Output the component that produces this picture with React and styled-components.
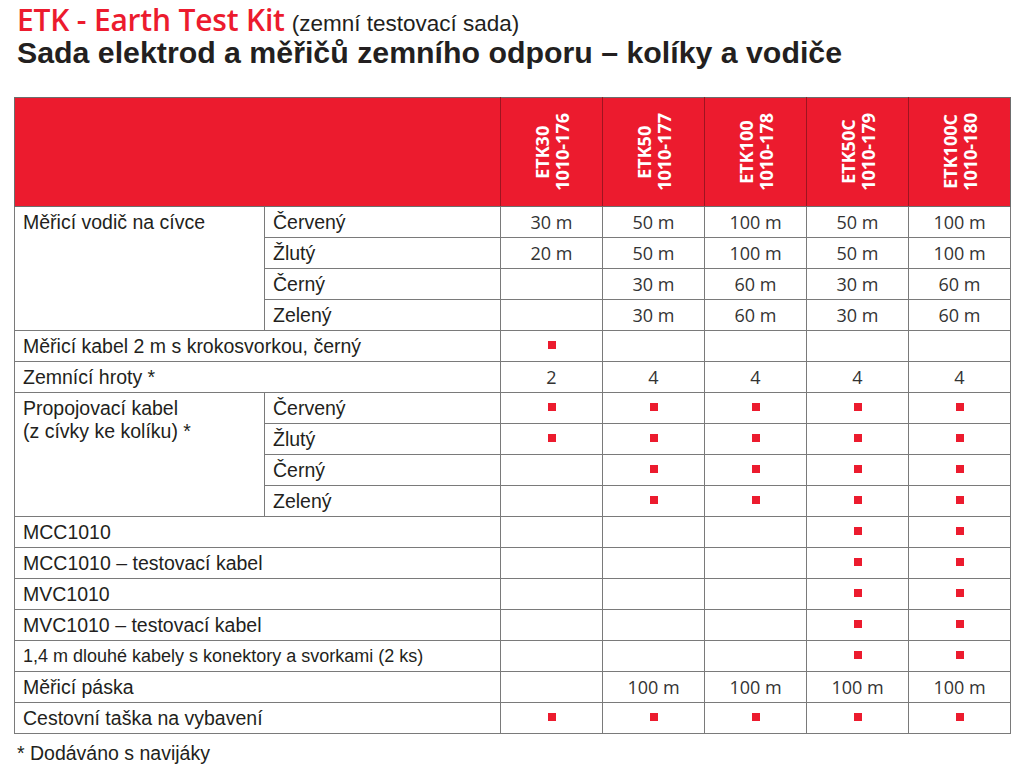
import React from "react";
import styled, { createGlobalStyle } from "styled-components";

const Global = createGlobalStyle`
  html, body { margin: 0; padding: 0; background: #fff; }
  body { font-family: "Liberation Sans", Arial, sans-serif; color: #231f20; }
`;

const RED = "#ec1b2e";

const Page = styled.div`
  width: 1024px;
  height: 768px;
  box-sizing: border-box;
  padding: 0 0 0 14px;
  overflow: hidden;
`;

const Heading = styled.header`
  padding-left: 3px;
  margin-bottom: 25px;
`;

const TitleLine = styled.div`
  height: 34px;
  line-height: 40px;
  white-space: nowrap;
`;

const Brand = styled.span`
  font-family: "Open Sans", sans-serif;
  font-weight: 600;
  font-size: 30px;
  color: ${RED};
  letter-spacing: -0.2px;
`;

const Sub = styled.span`
  font-family: "Liberation Sans", Arial, sans-serif;
  font-size: 22.5px;
  color: #231f20;
  margin-left: 7px;
`;

const Subtitle = styled.h1`
  margin: 0;
  font-family: "Liberation Sans", Arial, sans-serif;
  font-weight: 700;
  font-size: 30.3px;
  line-height: 38px;
  color: #231f20;
  white-space: nowrap;
`;

const Table = styled.table`
  border-collapse: collapse;
  table-layout: fixed;
  width: 997px;
  border: 1px solid #6d6d6d;
`;

const HeadCell = styled.th`
  background: ${RED};
  height: 108px;
  padding: 0;
  border-left: 1px solid ${(p) => (p.$first ? "#6d6d6d" : "#9e1420")};
  border-bottom: 1px solid #6d6d6d;
  vertical-align: middle;
`;

const Vertical = styled.div`
  writing-mode: vertical-rl;
  transform: rotate(180deg);
  margin: 0 auto;
  font-family: "Open Sans", sans-serif;
  font-weight: 700;
  font-size: 18px;
  line-height: 20px;
  color: #fff;
  text-align: center;
  white-space: nowrap;
`;

const Cell = styled.td`
  height: 30px;
  padding: 0 8px;
  border: 1px solid #7a7a7a;
  font-family: "Liberation Sans", Arial, sans-serif;
  font-size: ${(p) => (p.$small ? "18px" : "19.5px")};
  line-height: 23px;
  color: #231f20;
  vertical-align: ${(p) => (p.$top ? "top" : "middle")};
  padding-top: ${(p) => (p.$top ? "4px" : "0")};
  white-space: nowrap;
`;

const ValueCell = styled.td`
  height: 30px;
  padding: 0;
  border: 1px solid #7a7a7a;
  font-family: "Open Sans", sans-serif;
  font-size: 18px;
  color: #333;
  text-align: center;
  vertical-align: middle;
`;

const Mark = styled.span`
  display: inline-block;
  width: 8px;
  height: 8px;
  background: #ec1b2e;
  vertical-align: middle;
  position: relative;
  top: -3px;
`;

const Footnote = styled.p`
  margin: 8px 0 0 3px;
  font-family: "Liberation Sans", Arial, sans-serif;
  font-size: 19.5px;
  color: #231f20;
`;

const models = [
  ["ETK30", "1010-176"],
  ["ETK50", "1010-177"],
  ["ETK100", "1010-178"],
  ["ETK50C", "1010-179"],
  ["ETK100C", "1010-180"],
];

const X = "x";

const groups = [
  {
    label: "Měřicí vodič na cívce",
    rows: [
      ["Červený", ["30 m", "50 m", "100 m", "50 m", "100 m"]],
      ["Žlutý", ["20 m", "50 m", "100 m", "50 m", "100 m"]],
      ["Černý", ["", "30 m", "60 m", "30 m", "60 m"]],
      ["Zelený", ["", "30 m", "60 m", "30 m", "60 m"]],
    ],
  },
  { label: "Měřicí kabel 2 m s krokosvorkou, černý", values: [X, "", "", "", ""] },
  { label: "Zemnící hroty *", values: ["2", "4", "4", "4", "4"] },
  {
    label: ["Propojovací kabel", "(z cívky ke kolíku) *"],
    rows: [
      ["Červený", [X, X, X, X, X]],
      ["Žlutý", [X, X, X, X, X]],
      ["Černý", ["", X, X, X, X]],
      ["Zelený", ["", X, X, X, X]],
    ],
  },
  { label: "MCC1010", values: ["", "", "", X, X] },
  { label: "MCC1010 – testovací kabel", values: ["", "", "", X, X] },
  { label: "MVC1010", values: ["", "", "", X, X] },
  { label: "MVC1010 – testovací kabel", values: ["", "", "", X, X] },
  { label: "1,4 m dlouhé kabely s konektory a svorkami (2 ks)", small: true, values: ["", "", "", X, X] },
  { label: "Měřicí páska", values: ["", "100 m", "100 m", "100 m", "100 m"] },
  { label: "Cestovní taška na vybavení", values: [X, X, X, X, X] },
];

const Values = ({ values }) =>
  values.map((v, i) => (
    <ValueCell key={i}>{v === X ? <Mark /> : v}</ValueCell>
  ));

export default function App() {
  const body = [];
  groups.forEach((g, gi) => {
    if (g.rows) {
      g.rows.forEach(([sub, vals], ri) => {
        body.push(
          <tr key={`${gi}-${ri}`}>
            {ri === 0 && (
              <Cell $top rowSpan={g.rows.length}>
                {Array.isArray(g.label)
                  ? g.label.map((l, k) => <div key={k}>{l}</div>)
                  : g.label}
              </Cell>
            )}
            <Cell>{sub}</Cell>
            <Values values={vals} />
          </tr>
        );
      });
    } else {
      body.push(
        <tr key={gi}>
          <Cell colSpan={2} $small={g.small}>
            {g.label}
          </Cell>
          <Values values={g.values} />
        </tr>
      );
    }
  });

  return (
    <>
      <Global />
      <Page>
        <Heading>
          <TitleLine>
            <Brand>ETK - Earth Test Kit</Brand>
            <Sub>(zemní testovací sada)</Sub>
          </TitleLine>
          <Subtitle>Sada elektrod a měřičů zemního odporu – kolíky a vodiče</Subtitle>
        </Heading>
        <Table>
          <colgroup>
            <col style={{ width: 250 }} />
            <col style={{ width: 236 }} />
            <col style={{ width: 102 }} />
            <col style={{ width: 102 }} />
            <col style={{ width: 102 }} />
            <col style={{ width: 102 }} />
            <col style={{ width: 102 }} />
          </colgroup>
          <thead>
            <tr>
              <HeadCell $first colSpan={2} />
              {models.map(([a, b]) => (
                <HeadCell key={a}>
                  <Vertical>
                    {a}
                    <br />
                    {b}
                  </Vertical>
                </HeadCell>
              ))}
            </tr>
          </thead>
          <tbody>{body}</tbody>
        </Table>
        <Footnote>* Dodáváno s navijáky</Footnote>
      </Page>
    </>
  );
}
